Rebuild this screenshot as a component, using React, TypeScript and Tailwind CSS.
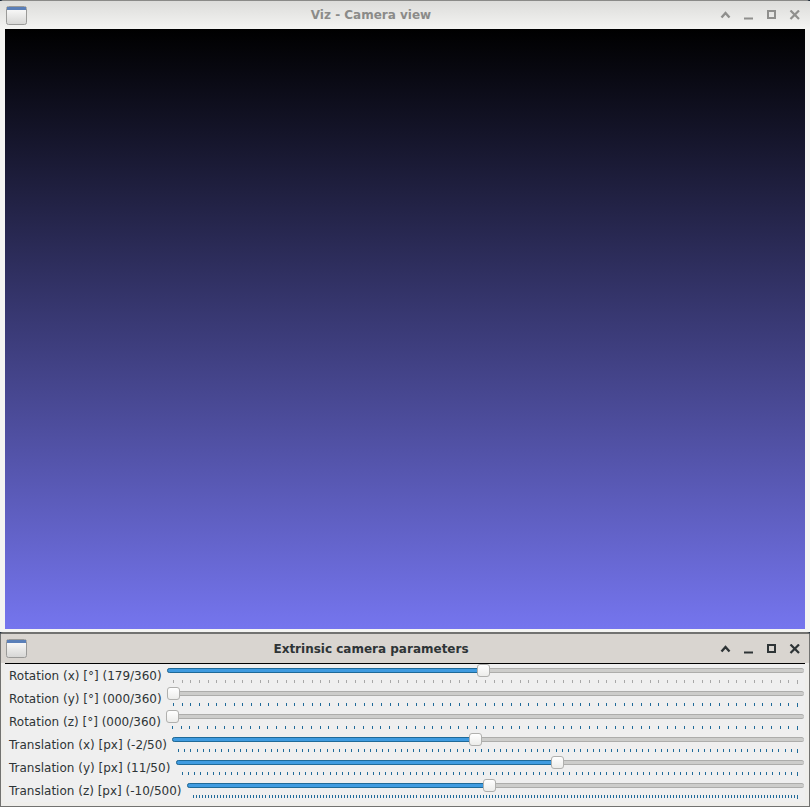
import React from "react";

function WinIcon({ active }: { active: boolean }) {
  return (
    <svg width="21" height="19" viewBox="0 0 21 19" className="shrink-0">
      <defs>
        <linearGradient id={active ? "wa" : "wb"} x1="0" y1="0" x2="0" y2="1">
          <stop offset="0" stopColor="#ffffff" />
          <stop offset="1" stopColor="#d6d6d4" />
        </linearGradient>
      </defs>
      <rect x="0.5" y="0.5" width="20" height="18" rx="2" fill={`url(#${active ? "wa" : "wb"})`} stroke="#9a9a98" />
      <rect x="1" y="1" width="19" height="3" fill="#5a7fb8" />
    </svg>
  );
}

function Controls({ color }: { color: string }) {
  return (
    <svg width="80" height="10" viewBox="0 0 80 10" fill="none" stroke={color} className="shrink-0 block">
      <path d="M1.5 7.5 L5.5 3 L9.5 7.5" strokeWidth="2.4" />
      <path d="M24 8.5 H33" strokeWidth="2" />
      <rect x="48" y="1" width="7" height="7" strokeWidth="2" />
      <path d="M70.5 0.5 L79 9 M79 0.5 L70.5 9" strokeWidth="2.2" />
    </svg>
  );
}

function Ticks({ width, count, color }: { width: number; count: number; color: string }) {
  const lines = [];
  for (let i = 0; i <= count; i++) {
    const x = Math.round((i * (width - 1)) / count) + 0.5;
    lines.push(<line key={i} x1={x} x2={x} y1={0} y2={i === count ? 4 : 3} stroke={color} strokeWidth="1" />);
  }
  return (
    <svg width={width} height="4" className="block ml-[6px] mt-[7px]">
      {lines}
    </svg>
  );
}

type Row = {
  label: string;
  thumb: number;
  count: number;
  tickColor: string;
  left: number;
};

const rows: Row[] = [
  { label: "Rotation (x) [°] (179/360)", thumb: 310, count: 72, tickColor: "#a8a8a8", left: 167 },
  { label: "Rotation (y) [°] (000/360)", thumb: 0, count: 72, tickColor: "#1f6a99", left: 167 },
  { label: "Rotation (z) [°] (000/360)", thumb: 0, count: 72, tickColor: "#1f6a99", left: 166 },
  { label: "Translation (x) [px] (-2/50)", thumb: 297, count: 100, tickColor: "#1f6a99", left: 172 },
  { label: "Translation (y) [px] (11/50)", thumb: 375, count: 100, tickColor: "#1f6a99", left: 176 },
  { label: "Translation (z) [px] (-10/500)", thumb: 296, count: 200, tickColor: "#1f6a99", left: 187 },
];

function SliderRow({ row }: { row: Row }) {
  return (
    <div className="flex h-[23px]">
      <div className="flex-1 min-w-0 flex items-center pl-[4px] pt-[1px] whitespace-nowrap text-[12px] leading-none text-[#2e3436]">
        {row.label}
      </div>
      <div className="shrink-0 pt-[4px]" style={{ width: 804 - row.left }}>
        <div className="relative h-[5px] rounded-[3px] bg-[#cdcdcb] border-y border-[#adadab]">
          {row.thumb > 0 && (
            <div
              className="absolute left-0 top-[-1px] h-[5px] rounded-l-[3px] border border-[#1f6a99] bg-[#3f9be0]"
              style={{ width: row.thumb + 4 }}
            />
          )}
          <div
            className="absolute top-[-5px] w-[13px] h-[13px] rounded-[3px] border border-[#b0b0ae] bg-linear-to-b/srgb from-[#ffffff] to-[#ececea]"
            style={{ left: row.thumb }}
          />
        </div>
        <Ticks width={798 - row.left - 6} count={row.count} color={row.tickColor} />
      </div>
    </div>
  );
}

export default function App() {
  return (
    <div className="w-[810px] h-[807px] overflow-hidden bg-[#1c2a3a] flex flex-col font-['DejaVu_Sans',sans-serif]">
      <div className="h-[632px] shrink-0 flex flex-col rounded-t-[4px] border-t border-[#8a8a88] bg-[#f4f4f2]">
        <div className="h-[28px] shrink-0 flex items-center pl-[6px] pr-[10px] bg-linear-to-b/srgb from-[#dcdcda] to-[#f4f4f2]">
          <WinIcon active={false} />
          <div className="flex-1 text-center pr-[5px] text-[12px] font-bold text-[#8b8b89]">Viz - Camera view</div>
          <Controls color="#8f8f8d" />
        </div>
        <div className="h-[600px] shrink-0 mx-[5px] bg-linear-to-b/srgb from-[#000000] to-[#7575ee]" />
      </div>
      <div className="h-[175px] shrink-0 flex flex-col rounded-t-[3px] border-t-2 border-x border-b border-[#727270] bg-[#efeeeb]">
        <div className="h-[29px] shrink-0 flex items-center pl-[5px] pr-[9px] bg-[#d9d5d0]">
          <WinIcon active={true} />
          <div className="flex-1 text-center pr-[5px] text-[12px] font-bold text-[#2e3436]">Extrinsic camera parameters</div>
          <Controls color="#2e3436" />
        </div>
        <div className="mx-[4px] h-[139px] border-t border-black bg-[#efefef] flex flex-col">
          {rows.map((r) => (
            <div key={r.label} className="mr-[1px]">
              <SliderRow row={r} />
            </div>
          ))}
        </div>
      </div>
    </div>
  );
}
